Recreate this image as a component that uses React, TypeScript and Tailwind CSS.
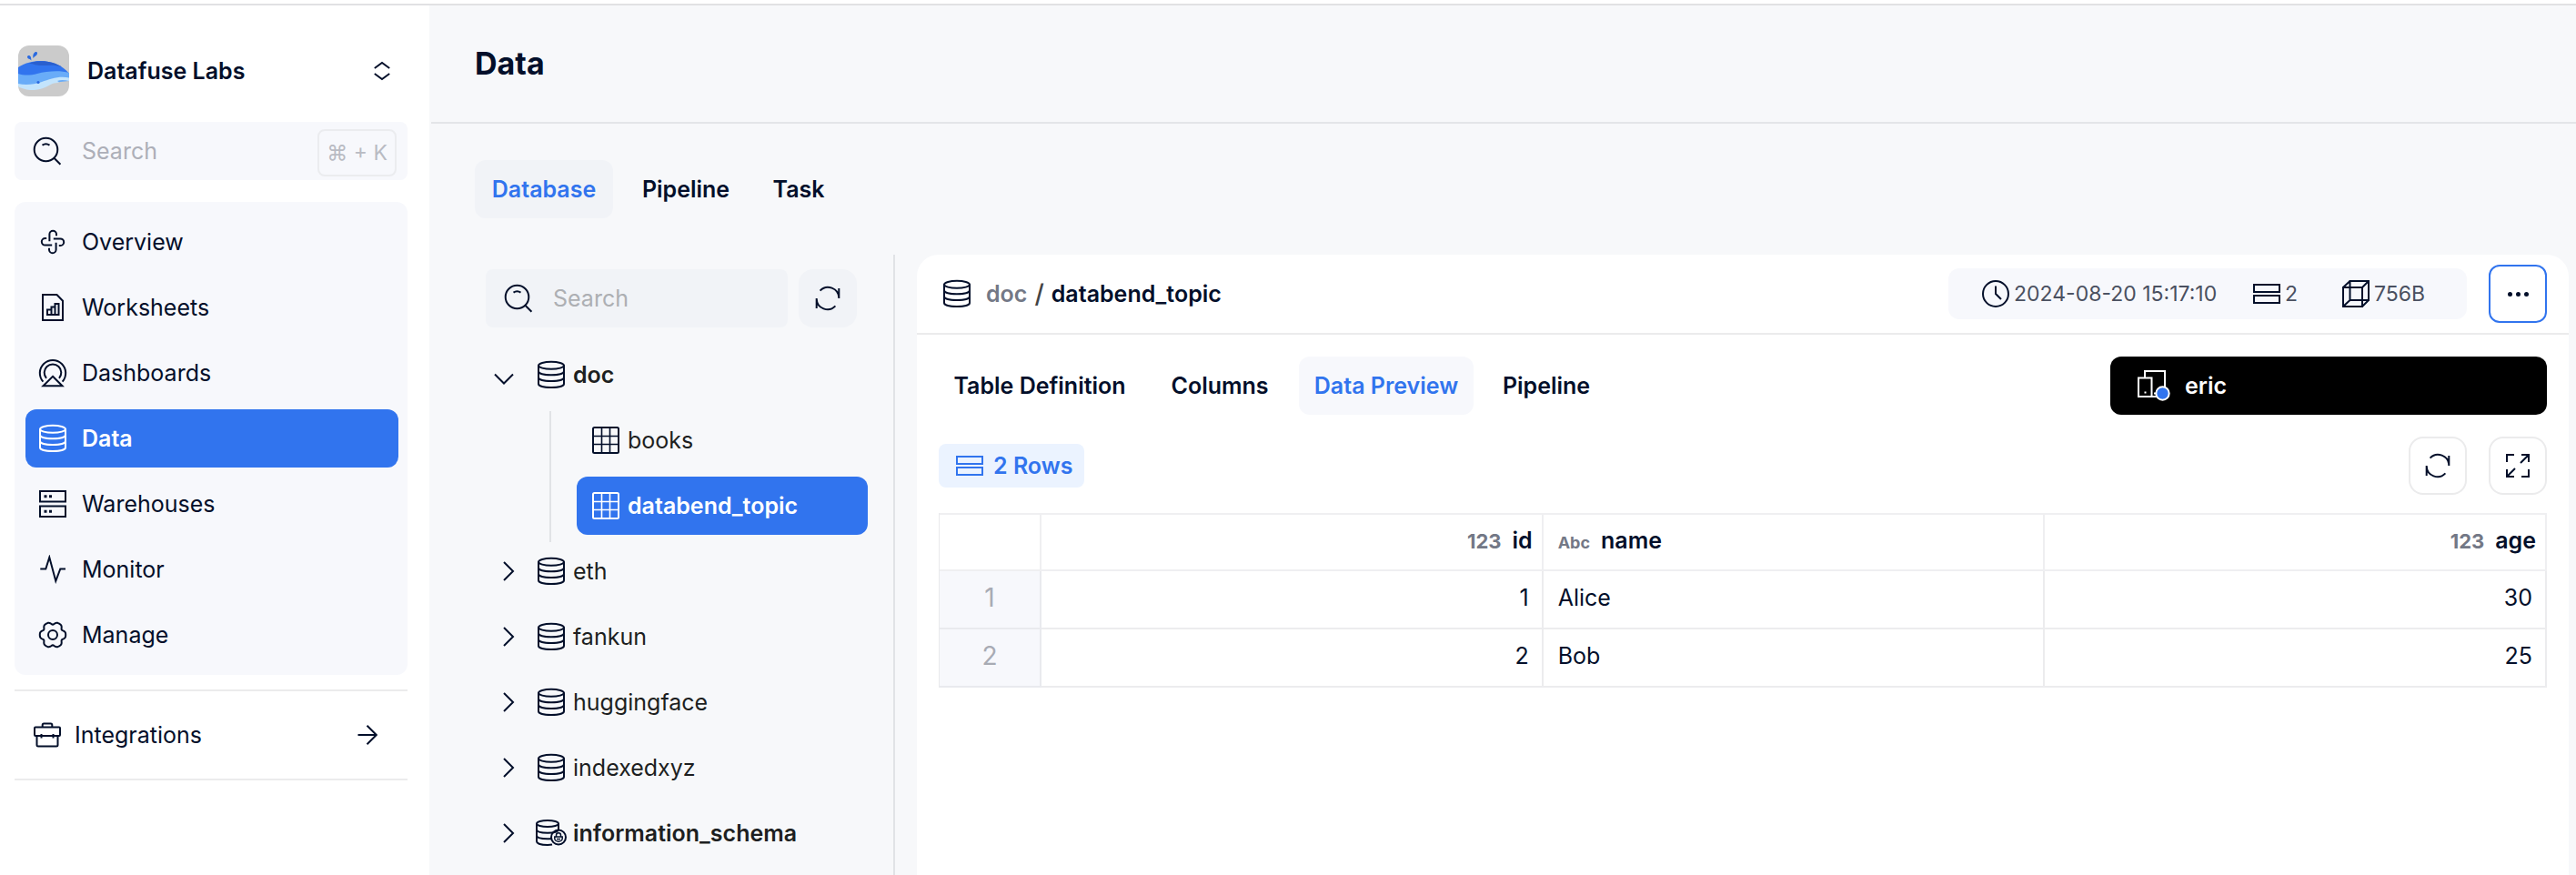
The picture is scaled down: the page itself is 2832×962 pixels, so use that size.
import React from "react";

type IconProps = { className?: string; children?: React.ReactNode };

function Icon({ className = "", children }: IconProps) {
  return (
    <svg
      viewBox="0 0 32 32"
      fill="none"
      stroke="currentColor"
      strokeWidth="2"
      aria-hidden="true"
      className={"size-8 shrink-0 " + className}
    >
      {children}
    </svg>
  );
}

const SearchIcon = ({ className }: IconProps) => (
  <Icon className={className}>
    <circle cx="14.5" cy="14.5" r="12.8" />
    <path d="M23.4 23.8l7 7M10.5 9.6q4-2.8 8 0" />
  </Icon>
);

const DatabaseIcon = ({ className }: IconProps) => (
  <Icon className={className}>
    <ellipse cx="16" cy="5.8" rx="14" ry="4" />
    <path d="M2 5.8V26c0 2.4 6 4 14 4s14-1.600 14-4V5.800M2 12.300c0 2.400 6 4 14 4s14-1.600 14-4M2 19c0 2.400 6 4 14 4s14-1.600 14-4" />
  </Icon>
);

const LockedDatabaseIcon = () => (
  <svg viewBox="0 0 34 32" fill="none" stroke="currentColor" strokeWidth="2" aria-hidden="true" className="-mx-px h-8 w-[34px] shrink-0">
    <ellipse cx="13" cy="5.500" rx="12" ry="3.600" />
    <path d="M1 5.500V25c0 2.400 5 4 12 4 2 0 3.500-.1 5-.4M25 5.500V12M1 12c0 2.300 5 3.700 12 3.700s12-1.400 12-3.700M1 18.500c0 2.300 5 3.700 12 3.700 1.500 0 2.800-.1 4-.3" />
    <circle cx="25" cy="20.500" r="8" />
    <path d="M22.500 19.500v-1.200a2.500 2.500 0 0 1 5 0v1.200M20.800 20h8.400v2a4.200 3.200 0 0 1-8.400 0zM23 22.500h4" strokeWidth="1.500" />
  </svg>
);

const GridIcon = () => (
  <Icon>
    <rect x="2" y="2" width="28" height="28" rx="1.500" />
    <path d="M11.500 2v28M20.500 2v28M2 11.500h28M2 20.500h28" strokeWidth="1.600" />
  </Icon>
);

const RefreshIcon = () => (
  <Icon>
    <path d="M7.600 7.600A12 12 0 0 1 28.300 15.500M28.300 5v11" />
    <path d="M24.400 24.400A12 12 0 0 1 3.700 16.500M3.700 27V16" />
  </Icon>
);

const RowsIcon = () => (
  <Icon>
    <rect x="2" y="6" width="28" height="8" />
    <rect x="2" y="18" width="28" height="8" />
  </Icon>
);

const PinwheelIcon = () => (
  <Icon>
    {[0, 90, 180, 270].map((angle) => (
      <path key={angle} d="M12.400 15.200V7.600a3.800 3.800 0 0 1 7.600 0v1.600" transform={`rotate(${angle} 16 16)`} />
    ))}
  </Icon>
);

const ReportIcon = () => (
  <Icon>
    <path d="M5 2h15.500L27 8.700V30H5z" />
    <path d="M10 18.500h4.500V24H10zM14.500 15.500h4V24h-4zM18.500 12h4V24h-4z" />
  </Icon>
);

const DashboardIcon = () => (
  <Icon>
    <path d="M5.400 25.600a14.200 14.200 0 1 1 21.200 0" />
    <path d="M9 21.800a9.300 9.300 0 1 1 14 0" />
    <path d="M16 19.800L26.500 30.200h-21z" />
  </Icon>
);

const ServersIcon = () => (
  <Icon>
    <rect x="2" y="2" width="28" height="11.500" />
    <rect x="2" y="18.500" width="28" height="11.500" />
    <path d="M6.500 7.800h3M12 7.800h3M6.500 24.300h3M12 24.300h3" strokeWidth="3" />
  </Icon>
);

const PulseIcon = () => (
  <Icon>
    <path d="M2.300 15.500h6L12.300 2.800l7 26L24.300 15.500h5.700" />
  </Icon>
);

const gearOutline = (() => {
  const points: string[] = [];
  for (let i = 0; i < 120; i++) {
    const angle = (i / 120) * Math.PI * 2;
    const notch = Math.pow((1 - Math.cos(6 * angle)) / 2, 2.2);
    const radius = 14.2 - 2.9 * notch;
    points.push(`${(16 + radius * Math.cos(angle)).toFixed(2)} ${(16 + radius * Math.sin(angle)).toFixed(2)}`);
  }
  return `M${points.join("L")}Z`;
})();

const GearIcon = () => (
  <Icon>
    <path d={gearOutline} strokeLinejoin="round" />
    <circle cx="16" cy="16" r="5" />
  </Icon>
);

const BriefcaseIcon = () => (
  <Icon>
    <rect x="2" y="7.500" width="28" height="9.500" rx="1" />
    <path d="M4.500 17v10a1.500 1.500 0 0 0 1.500 1.500h20a1.500 1.500 0 0 0 1.500-1.500V17M10.700 7.500v-2.500a1.500 1.500 0 0 1 1.500-1.500h7.600a1.500 1.500 0 0 1 1.500 1.500v2.500M9.500 15v4.500M22.500 15v4.500" />
  </Icon>
);

const ArrowIcon = () => (
  <Icon>
    <path d="M5.500 16h20M15.500 5.700L25.800 16 15.500 26.300" />
  </Icon>
);

const SortIcon = () => (
  <Icon>
    <path d="M7.800 13L16 7l8.200 6M7.800 19l8.200 6 8.200-6" />
  </Icon>
);

const Chevron = ({ open }: { open?: boolean }) => (
  <Icon>{open ? <path d="M6 15.500l10 10 10-10" /> : <path d="M16 6l10 10-10 10" />}</Icon>
);

const ClockIcon = () => (
  <Icon>
    <circle cx="16" cy="16" r="14" />
    <path d="M16 7.500V16l6 6" />
  </Icon>
);

const CubeIcon = () => (
  <Icon>
    <path d="M2 9h21v21H2zM9.500 2H30v21H9.500zM2 9l7.500-7M23 9l7-7M2 30l7.500-7M23 30l7-7" />
  </Icon>
);

const ExpandIcon = () => (
  <Icon>
    <path d="M4 12V4h8M20 4h8v8M28 4l-9 9M28 20v8h-8M12 28H4v-8M4 28l9-9" />
  </Icon>
);

const DevicesIcon = () => (
  <svg viewBox="0 0 36 34" fill="none" stroke="currentColor" strokeWidth="2" aria-hidden="true" className="h-[34px] w-9 shrink-0">
    <path d="M8 8V1h22v20M15 29h8" />
    <path d="M1 8.500h14.500V29H1zM7.500 24.500h2M18 25.500h2" />
    <circle cx="27.500" cy="25.500" r="7.200" fill="#3174ee" />
  </svg>
);

const WhaleLogo = () => (
  <svg viewBox="0 0 56 56" role="img" aria-label="Datafuse Labs" className="size-14 shrink-0 rounded-xl">
    <rect width="56" height="56" fill="#cbcbcb" />
    <path d="M0 24C8 19 16 17 24 17c13 0 25 5 32 14v4L0 36z" fill="#3174ee" />
    <path d="M12 19.500c13-4.500 27-2 36 4-9-3-15-1.500-22-1.500-6 0-9-1.500-14-2.500z" fill="#2a5fce" />
    <path d="M0 31c6 2 13 2 21 0 10-2.500 24-4 35-1v9L0 45z" fill="#69acf8" />
    <path d="M0 42c8 2 17 1 26-2 9-3.500 20-7 30-4.500v3.500c-5-1-9-1.500-13 0l2 1.200c-2 1.200-5 1-7.500 1.800C29 47 22 49.500 13 49 8 48.500 3 47 0 45z" fill="#c3e4fc" />
    <circle cx="22" cy="40.500" r="1.600" fill="#2a6ae0" />
    <path d="M14.500 16.500c-1-1.800-4.500-1.500-4.500-4 0-1.300 1.500-2 2.700-1.300 1.800 1 1.300 3 1.800 5.300zM16.500 14c-.5-2.500-.5-5 2-6.800 1.500-.8 3 0 2.500 1.800-.5 2.500-3 2.500-4.500 5z" fill="#2a6ae0" />
  </svg>
);

const navItems = [
  { label: "Overview", icon: <PinwheelIcon /> },
  { label: "Worksheets", icon: <ReportIcon /> },
  { label: "Dashboards", icon: <DashboardIcon /> },
  { label: "Data", icon: <DatabaseIcon />, active: true },
  { label: "Warehouses", icon: <ServersIcon /> },
  { label: "Monitor", icon: <PulseIcon /> },
  { label: "Manage", icon: <GearIcon /> },
];

function Sidebar() {
  return (
    <aside className="flex w-[472px] shrink-0 flex-col bg-white pr-6 pl-4">
      <button type="button" className="mt-11 flex h-14 items-center pr-3 pl-1">
        <WhaleLogo />
        <span className="ml-5 flex-1 text-left font-semibold">Datafuse Labs</span>
        <SortIcon />
      </button>

      <label className="mt-7 flex h-16 items-center rounded-lg bg-[#f7f8fc] pr-3 pl-5">
        <SearchIcon />
        <input
          type="text"
          aria-label="Search"
          placeholder="Search"
          className="ml-[22px] min-w-0 flex-1 bg-transparent outline-none placeholder:text-[#adafb8]"
        />
        <kbd className="mt-1 flex h-[52px] items-center rounded-lg border-2 border-[#ebecef] px-2 font-['Inter','DejaVu_Sans',sans-serif] text-[23px] text-[#b9bbc3]">
          ⌘ + K
        </kbd>
      </label>

      <nav className="mt-6 flex flex-col gap-2 rounded-xl bg-[#f7f8fc] py-3 pr-2.5 pl-3">
        {navItems.map((item) => (
          <a
            key={item.label}
            href="#"
            className={
              item.active
                ? "flex h-16 items-center gap-4 rounded-xl bg-[#3174ee] px-3.5 font-semibold text-white"
                : "flex h-16 items-center gap-4 rounded-xl px-3.5"
            }
          >
            {item.icon}
            {item.label}
          </a>
        ))}
      </nav>

      <a href="#" className="mt-4 flex h-[100px] items-center gap-3.5 border-y-2 border-[#ebebec] pr-7 pl-5">
        <BriefcaseIcon />
        <span className="flex-1">Integrations</span>
        <ArrowIcon />
      </a>
    </aside>
  );
}

type Tab = { label: string; width: string; active?: boolean };

const sectionTabs: Tab[] = [
  { label: "Database", width: "w-[152px]", active: true },
  { label: "Pipeline", width: "w-32" },
  { label: "Task", width: "w-22" },
];
const tableTabs: Tab[] = [
  { label: "Table Definition", width: "w-[222px]" },
  { label: "Columns", width: "w-[142px]" },
  { label: "Data Preview", width: "w-48", active: true },
  { label: "Pipeline", width: "w-32" },
];

function Tabs({ tabs, activeClass }: { tabs: Tab[]; activeClass: string }) {
  return (
    <div className="flex shrink-0 gap-4">
      {tabs.map((tab) => (
        <button
          key={tab.label}
          type="button"
          className={`h-16 rounded-xl text-center font-semibold whitespace-nowrap ${tab.width} ${tab.active ? activeClass : ""}`}
        >
          {tab.label}
        </button>
      ))}
    </div>
  );
}

const collapsed = ["eth", "fankun", "huggingface", "indexedxyz"];

function TreePanel() {
  return (
    <section className="flex w-[510px] shrink-0 flex-col border-r-2 border-[#e1e3e6] pr-7 pl-[60px] text-[#1d1f21]">
      <div className="mt-4 mr-3 flex gap-3 text-[#030f2a]">
        <label className="flex h-16 min-w-0 flex-1 items-center rounded-lg bg-[#f1f3f7] px-5">
          <SearchIcon />
          <input
            type="text"
            aria-label="Search databases"
            placeholder="Search"
            className="ml-[22px] min-w-0 flex-1 bg-transparent outline-none placeholder:text-[#adafb3]"
          />
        </label>
        <button type="button" aria-label="Refresh databases" className="flex size-16 items-center justify-center rounded-2xl bg-[#f1f3f7]">
          <RefreshIcon />
        </button>
      </div>

      <ul className="mt-4">
        <li>
          <button type="button" className="flex h-[72px] w-full items-center gap-2 pl-1 font-semibold">
            <span className="mr-3 text-[#030f2a]"><Chevron open /></span>
            <span className="text-[#030f2a]"><DatabaseIcon /></span>
            doc
          </button>
          <ul className="mt-1 -mb-1 ml-[70px] flex flex-col gap-2 border-l-2 border-[#e1e3e6] pb-2 pl-7">
            <li>
              <button type="button" className="flex h-16 w-full items-center gap-2 rounded-xl px-4">
                <span className="text-[#030f2a]"><GridIcon /></span>
                books
              </button>
            </li>
            <li>
              <button type="button" className="flex h-16 w-full items-center gap-2 rounded-xl bg-[#3174ee] px-4 font-semibold text-white">
                <GridIcon />
                databend_topic
              </button>
            </li>
          </ul>
        </li>
        {collapsed.map((name) => (
          <li key={name}>
            <button type="button" className="flex h-[72px] w-full items-center gap-2 pl-1">
              <span className="mr-3 text-[#030f2a]"><Chevron /></span>
              <span className="text-[#030f2a]"><DatabaseIcon /></span>
              {name}
            </button>
          </li>
        ))}
        <li>
          <button type="button" className="flex h-[72px] w-full items-center gap-2 pl-1 font-semibold">
            <span className="mr-3 text-[#030f2a]"><Chevron /></span>
            <span className="text-[#030f2a]"><LockedDatabaseIcon /></span>
            information_schema
          </button>
        </li>
      </ul>
    </section>
  );
}

function TypeTag({ kind }: { kind: "number" | "text" }) {
  return kind === "number" ? (
    <span className="mr-3 text-[22px] font-bold text-[#737886]">123</span>
  ) : (
    <span className="mr-3 text-lg font-bold text-[#737886]">Abc</span>
  );
}

const people = [
  { id: 1, name: "Alice", age: 30 },
  { id: 2, name: "Bob", age: 25 },
];

function PreviewTable() {
  return (
    <table className="mt-5 w-full table-fixed border-separate border-spacing-0 border-l border-[#e9eaec] leading-8">
      <colgroup>
        <col className="w-28" />
        <col />
        <col />
        <col />
      </colgroup>
      <thead>
        <tr className="h-16">
          <th scope="col" aria-label="Row" className="border-t-2 border-r-2 border-b-2 border-[#efeff1]" />
          <th scope="col" className="border-t-2 border-r-2 border-b-2 border-[#efeff1] pr-2.5 pb-1 text-right font-semibold">
            <TypeTag kind="number" />id
          </th>
          <th scope="col" className="border-t-2 border-r-2 border-b-2 border-[#efeff1] pb-1 pl-4 text-left font-semibold">
            <TypeTag kind="text" />name
          </th>
          <th scope="col" className="border-t-2 border-r-2 border-b-2 border-[#efeff1] pr-2.5 pb-1 text-right font-semibold">
            <TypeTag kind="number" />age
          </th>
        </tr>
      </thead>
      <tbody>
        {people.map((person) => (
          <tr key={person.id} className="h-16">
            <th scope="row" className="border-r-2 border-b-2 border-[#e9eaee] bg-[#f7f8fc] pb-1 text-center text-[28px] font-normal text-[#a8abb4]">
              {person.id}
            </th>
            <td className="border-r-2 border-b-2 border-[#ececee] pr-3.5 pb-1 text-right">{person.id}</td>
            <td className="border-r-2 border-b-2 border-[#ececee] pb-1 pl-4">{person.name}</td>
            <td className="border-r-2 border-b-2 border-[#ececee] pr-3.5 pb-1 text-right">{person.age}</td>
          </tr>
        ))}
      </tbody>
    </table>
  );
}

function TableCard() {
  return (
    <section className="mr-2 ml-6 flex min-w-0 flex-1 flex-col rounded-t-3xl bg-white">
      <header className="flex h-[88px] items-center justify-between border-b-2 border-[#ebebec] px-6">
        <h2 className="flex items-center pl-1 font-semibold">
          <DatabaseIcon />
          <span className="ml-4 text-[#737886]">doc</span>
          <span className="mx-2 text-[28px] font-medium text-[#444]">/</span>
          databend_topic
        </h2>
        <div className="flex items-center gap-6">
          <div className="flex h-14 w-[570px] items-center rounded-xl bg-[#f7f8fc] pl-9 text-[23px] text-[#4a5060]">
            <span className="flex w-[298px] items-center gap-1">
              <span className="text-[#030f2a]"><ClockIcon /></span>2024-08-20 15:17:10
            </span>
            <span className="flex w-[98px] items-center gap-1">
              <span className="text-[#030f2a]"><RowsIcon /></span>2
            </span>
            <span className="flex items-center gap-1">
              <span className="text-[#030f2a]"><CubeIcon /></span>756B
            </span>
          </div>
          <button type="button" aria-label="More actions" className="flex size-16 items-center justify-center gap-1 rounded-xl border-2 border-[#3174ee]">
            <span className="size-[5px] rounded-full bg-[#030f2a]" />
            <span className="size-[5px] rounded-full bg-[#030f2a]" />
            <span className="size-[5px] rounded-full bg-[#030f2a]" />
          </button>
        </div>
      </header>

      <div className="px-6">
        <div className="mt-6 flex items-center justify-between">
          <Tabs tabs={tableTabs} activeClass="bg-[#f7f8fc] text-[#3174ee]" />
          <button type="button" className="flex h-16 w-[480px] items-center gap-4 rounded-xl bg-black px-[30px] font-semibold text-white">
            <DevicesIcon />
            eric
          </button>
        </div>

        <div className="mt-6 flex items-center justify-between">
          <div className="flex h-12 w-40 items-center gap-2.5 rounded-lg bg-[#ebf3ff] pl-[18px] font-semibold whitespace-nowrap text-[#3174ee]">
            <RowsIcon />
            2 Rows
          </div>
          <div className="flex gap-6">
            <button type="button" aria-label="Refresh preview" className="flex size-16 items-center justify-center rounded-2xl border-2 border-[#ebebec]">
              <RefreshIcon />
            </button>
            <button type="button" aria-label="Full screen" className="flex size-16 items-center justify-center rounded-2xl border-2 border-[#ebebec]">
              <ExpandIcon />
            </button>
          </div>
        </div>

        <PreviewTable />
      </div>
    </section>
  );
}

export default function App() {
  return (
    <div className="flex h-screen flex-col overflow-hidden bg-white font-['Inter','Liberation_Sans',sans-serif] text-[25px] leading-8 text-[#030f2a]">
      <div className="mt-1 h-0.5 shrink-0 bg-[#e1e1e3]" />
      <div className="flex min-h-0 flex-1">
        <Sidebar />
        <main className="flex min-w-0 flex-1 flex-col bg-[#f7f8fa] pl-0.5">
          <header className="flex h-[130px] shrink-0 items-center border-b-2 border-[#e3e5e8] pl-12">
            <h1 className="text-[34px] leading-10 font-bold">Data</h1>
          </header>
          <div className="mt-10 flex shrink-0 pl-12">
            <Tabs tabs={sectionTabs} activeClass="bg-[#f1f3f7] text-[#3174ee]" />
          </div>
          <div className="mt-10 flex min-h-0 flex-1">
            <TreePanel />
            <TableCard />
          </div>
        </main>
      </div>
    </div>
  );
}
